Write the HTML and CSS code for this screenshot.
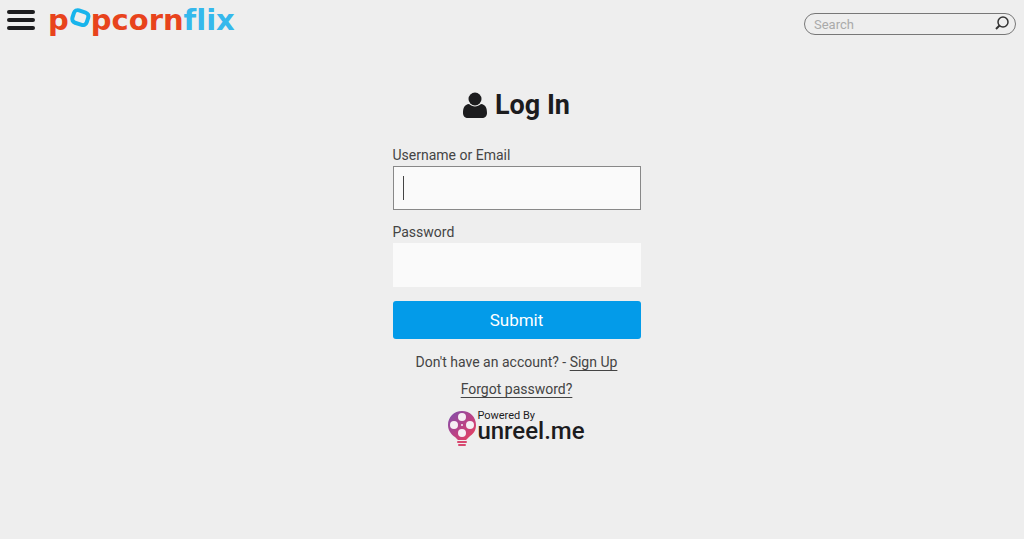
FILE: index.html
```html
<!DOCTYPE html>
<html lang="en">
<head>
    <meta charset="UTF-8">
    <meta name="viewport" content="width=device-width, initial-scale=1.0">
    <title>Log In - Popcornflix</title>
    <link rel="stylesheet" href="styles.css">
</head>
<body>
    <header class="header">
        <button class="menu-button" type="button" aria-label="Menu">
            <span class="bar"></span>
            <span class="bar"></span>
            <span class="bar"></span>
        </button>
        <a class="logo" href="#" aria-label="popcornflix">
            <span>p</span>
            <svg class="logo-frame" width="22" height="26" viewBox="0 0 22 26" aria-hidden="true">
                <rect x="4" y="4" width="15" height="13" rx="4" transform="rotate(18 11 10)" fill="none" stroke="#18b4ec" stroke-width="4"/>
            </svg>
            <span>pcorn</span><span class="logo-flix">flix</span>
        </a>
        <form class="search" role="search">
            <input class="search-input" type="search" placeholder="Search" aria-label="Search">
            <button class="search-button" type="submit" aria-label="Search">
                <svg width="16" height="16" viewBox="0 0 16 16" fill="none" stroke="#333">
                    <circle cx="9" cy="6" r="5" stroke-width="1.5"/>
                    <path d="M5.5 9.5L2 13" stroke-width="2"/>
                </svg>
            </button>
        </form>
    </header>

    <main class="login">
        <h1 class="title">
            <svg width="24" height="26" viewBox="0 0 24 26" fill="#1c1c1e" aria-hidden="true">
                <circle cx="12" cy="7" r="6.5"/>
                <path d="M6 12C1.5 12.500 0 16 0 21C0 24 2 26 5 26H19C22 26 24 24 24 21C24 16 22.500 12.500 18 12C14.500 15.300 9.500 15.300 6 12Z"/>
            </svg>
            Log In
        </h1>

        <form class="login-form">
            <label class="label" for="username">Username or Email</label>
            <div class="field">
                <input class="input active" type="text" id="username">
                <span class="caret"></span>
            </div>
            <label class="label" for="password">Password</label>
            <div class="field">
                <input class="input" type="password" id="password">
            </div>
            <button class="submit" type="submit">Submit</button>
        </form>

        <p class="note">Don't have an account? - <a href="#">Sign Up</a></p>
        <p class="note"><a href="#">Forgot password?</a></p>

        <a class="powered" href="#">
            <svg width="28" height="36" viewBox="0 0 28 36" aria-hidden="true">
                <defs>
                    <linearGradient id="bulb" x1="0" y1="0" x2="1" y2="1">
                        <stop offset="0" stop-color="#7b4fae"/>
                        <stop offset="0.550" stop-color="#bd4284"/>
                        <stop offset="1" stop-color="#ee4056"/>
                    </linearGradient>
                </defs>
                <path d="M14 0C6 0 0 6 0 14C0 20 4 24 7 26L10 29H18L21 26C25 23 28 20 28 14C28 6 22 0 14 0Z" fill="url(#bulb)"/>
                <path d="M10 31H18M11 34H17" stroke="#d84870" stroke-width="2" stroke-linecap="round"/>
                <g fill="#f6eef4">
                    <circle cx="14" cy="6" r="4"/>
                    <circle cx="6" cy="14" r="4"/>
                    <circle cx="22" cy="14" r="4"/>
                    <circle cx="14" cy="22" r="4"/>
                    <circle cx="14" cy="14" r="1"/>
                </g>
            </svg>
            <span class="powered-text">
                <span class="powered-by">Powered By</span>
                <span class="powered-name">unreel.me</span>
            </span>
        </a>
    </main>
</body>
</html>
```

FILE: styles.css
```css
* {
    box-sizing: border-box;
}

body {
    margin: 0;
    background-color: #eee;
    color: #444;
    font-family: Roboto, sans-serif;
    font-size: 14px;
    line-height: 20px;
}

button {
    border: none;
    padding: 0;
    background: none;
    font-family: inherit;
    cursor: pointer;
}

/* header */
.header {
    display: flex;
    align-items: center;
    height: 44px;
    padding: 0 8px 4px 7px;
}

.menu-button {
    display: flex;
    flex-direction: column;
    gap: 4px;
    width: 28px;
}

.bar {
    width: 100%;
    height: 4px;
    border-radius: 2px;
    background-color: #1c1c1e;
}

.logo {
    display: flex;
    align-items: center;
    margin-left: 13px;
    color: #e8431c;
    font-family: "DejaVu Sans", sans-serif;
    font-size: 29px;
    font-weight: bold;
    font-variant-ligatures: none;
    line-height: 32px;
    text-decoration: none;
}

.logo-flix {
    color: #35b8ec;
}

.search {
    display: flex;
    align-items: center;
    width: 212px;
    height: 22px;
    margin: 8px 0 0 auto;
    padding: 0 5px 0 9px;
    border: 1px solid #777;
    border-radius: 11px;
}

.search-input {
    flex: 1;
    min-width: 0;
    height: 12px;
    padding: 0;
    border: none;
    outline: none;
    background: none;
    font-family: inherit;
    font-size: 13px;
}

.search-input::placeholder {
    color: #aaa;
}

.search-button {
    display: flex;
}

/* login form */
.login {
    display: flex;
    flex-direction: column;
    align-items: center;
    padding: 44px 0 24px 9px;
}

.title {
    display: flex;
    align-items: center;
    gap: 8px;
    margin: 0 0 22px;
    color: #1c1c1e;
    font-size: 27px;
    line-height: 34px;
}

.login-form {
    width: 248px;
}

.label {
    display: block;
    line-height: 22px;
}

.field {
    position: relative;
    margin-bottom: 11px;
}

.input {
    display: block;
    width: 100%;
    height: 44px;
    padding: 0 10px;
    border: 1px solid #fafafa;
    outline: none;
    background-color: #fafafa;
    font-family: inherit;
    font-size: 18px;
}

.input.active {
    border-color: #888;
}

.caret {
    position: absolute;
    top: 10px;
    left: 10px;
    width: 1px;
    height: 24px;
    background-color: #444;
}

.submit {
    width: 100%;
    height: 38px;
    margin: 3px 0 13px;
    border-radius: 3px;
    background-color: #039be9;
    color: #fff;
    font-size: 17px;
}

.note {
    margin: 0 0 7px;
}

.note a {
    color: inherit;
    text-underline-offset: 3px;
}

.powered {
    display: flex;
    align-items: flex-start;
    margin-top: 5px;
    color: #1c1c1e;
    text-decoration: none;
}

.powered-text {
    display: flex;
    flex-direction: column;
    margin-left: 1px;
}

.powered-by {
    font-size: 11px;
    line-height: 10px;
}

.powered-name {
    font-size: 24px;
    font-weight: 500;
    line-height: 20px;
}
```
